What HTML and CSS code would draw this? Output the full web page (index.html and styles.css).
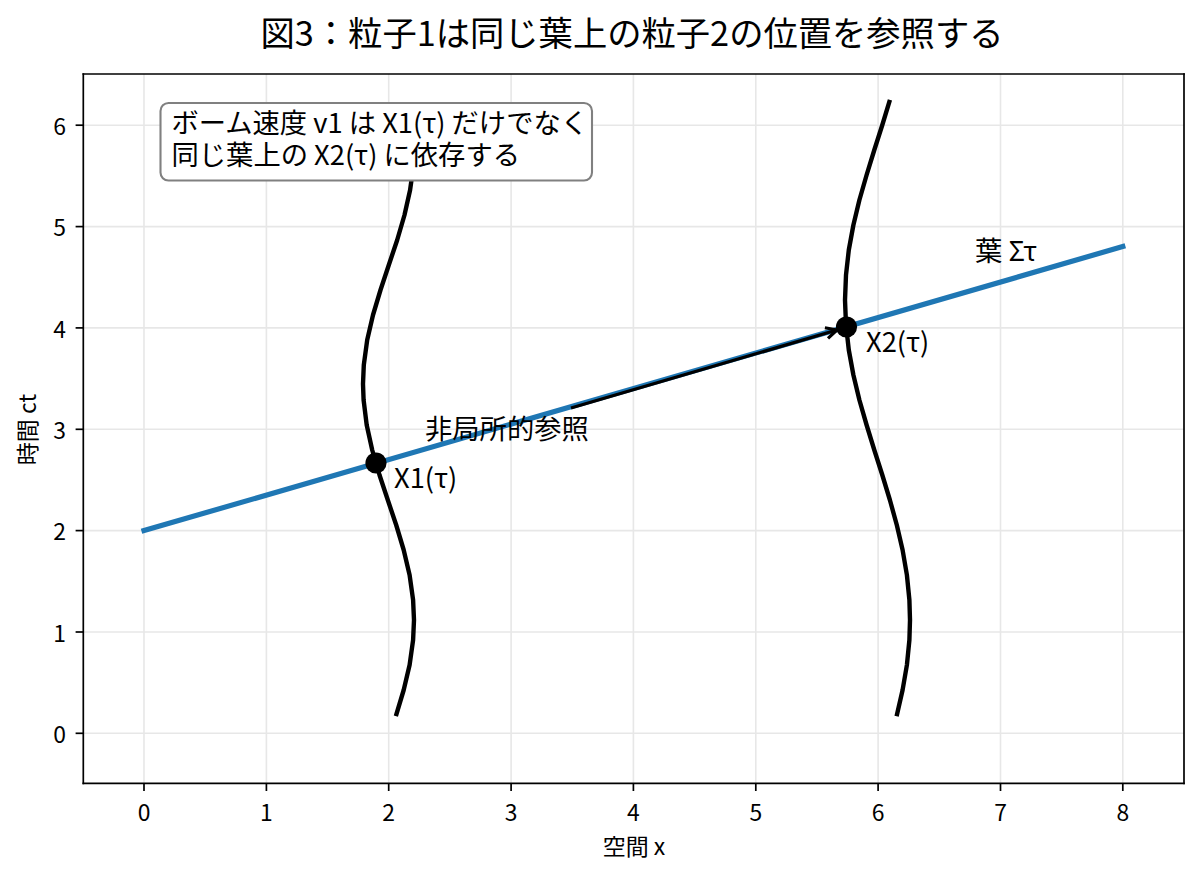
FILE: index.html
```html
<!DOCTYPE html>
<html lang="ja">
<head>
<meta charset="utf-8">
<title>図3</title>
<link rel="stylesheet" href="styles.css">
</head>
<body>
<div class="figure">
  <h1 class="title">図3：粒子1は同じ葉上の粒子2の位置を参照する</h1>
  <svg class="plot" width="1200" height="815" viewBox="0 64 1200 815" xmlns="http://www.w3.org/2000/svg">
    <g class="grid">
      <line x1="144" y1="74" x2="144" y2="783.3"/>
      <line x1="266.4" y1="74" x2="266.4" y2="783.3"/>
      <line x1="388.7" y1="74" x2="388.7" y2="783.3"/>
      <line x1="511.1" y1="74" x2="511.1" y2="783.3"/>
      <line x1="633.4" y1="74" x2="633.4" y2="783.3"/>
      <line x1="755.8" y1="74" x2="755.8" y2="783.3"/>
      <line x1="878.1" y1="74" x2="878.1" y2="783.3"/>
      <line x1="1000.5" y1="74" x2="1000.5" y2="783.3"/>
      <line x1="1122.8" y1="74" x2="1122.8" y2="783.3"/>
      <line x1="83.3" y1="733.3" x2="1184" y2="733.3"/>
      <line x1="83.3" y1="632" x2="1184" y2="632"/>
      <line x1="83.3" y1="530.6" x2="1184" y2="530.6"/>
      <line x1="83.3" y1="429.3" x2="1184" y2="429.3"/>
      <line x1="83.3" y1="327.9" x2="1184" y2="327.9"/>
      <line x1="83.3" y1="226.6" x2="1184" y2="226.6"/>
      <line x1="83.3" y1="125.2" x2="1184" y2="125.2"/>
    </g>

    <line class="leaf" x1="144" y1="530.6" x2="1122.8" y2="246.5"/>

    <polyline class="world" points="396.5,714 403.7,690 409.6,665 413.1,640 414,620 413.1,600 409.6,575 403.7,550 396.2,525 387.8,500 379.5,475 372.2,450 366.7,425 363.6,400 363,384 363.8,365 367.2,340 373,315 380.5,290 388.8,265 397.2,240 404.5,215 410.1,190 412.9,170 414,150 413.3,130"/>
    <polyline class="world" points="897.1,714 902.6,690 906.9,665 909.4,640 910,620 909.4,600 906.9,575 902.6,550 896.8,525 889.9,500 882.3,475 874.3,450 866.6,425 859.4,400 853.4,375 848.8,350 846,325 845,300 846,275 848.8,250 853.4,225 859.4,200 866.6,175 874.3,150 882.3,125 889.3,102"/>

    <line class="arrow" x1="571" y1="408" x2="836" y2="330.3"/>
    <polyline class="arrow-head" points="824.9,327.8 837,330 828,338.4"/>

    <circle class="dot" cx="376" cy="463" r="10.6"/>
    <circle class="dot" cx="846.5" cy="327" r="10.6"/>

    <text class="note" x="425" y="439">非局所的参照</text>
    <text class="note" x="394" y="488">X1(τ)</text>
    <text class="note" x="866" y="352">X2(τ)</text>
    <text class="note" x="975" y="261">葉 Στ</text>

    <g class="axes">
      <line class="spine" x1="83.3" y1="74" x2="1184" y2="74"/>
      <line class="spine" x1="1184" y1="74" x2="1184" y2="783.3"/>
      <line class="spine" x1="83.3" y1="783.3" x2="1184" y2="783.3"/>
      <line class="spine" x1="83.3" y1="74" x2="83.3" y2="783.3"/>

      <g class="ticks">
        <line x1="144" y1="783.3" x2="144" y2="791"/>
        <line x1="266.4" y1="783.3" x2="266.4" y2="791"/>
        <line x1="388.7" y1="783.3" x2="388.7" y2="791"/>
        <line x1="511.1" y1="783.3" x2="511.1" y2="791"/>
        <line x1="633.4" y1="783.3" x2="633.4" y2="791"/>
        <line x1="755.8" y1="783.3" x2="755.8" y2="791"/>
        <line x1="878.1" y1="783.3" x2="878.1" y2="791"/>
        <line x1="1000.5" y1="783.3" x2="1000.5" y2="791"/>
        <line x1="1122.8" y1="783.3" x2="1122.8" y2="791"/>
        <line x1="75.6" y1="733.3" x2="83.3" y2="733.3"/>
        <line x1="75.6" y1="632" x2="83.3" y2="632"/>
        <line x1="75.6" y1="530.6" x2="83.3" y2="530.6"/>
        <line x1="75.6" y1="429.3" x2="83.3" y2="429.3"/>
        <line x1="75.6" y1="327.9" x2="83.3" y2="327.9"/>
        <line x1="75.6" y1="226.6" x2="83.3" y2="226.6"/>
        <line x1="75.6" y1="125.2" x2="83.3" y2="125.2"/>
      </g>

      <g class="xtick-labels">
        <text x="144" y="821">0</text>
        <text x="266.4" y="821">1</text>
        <text x="388.7" y="821">2</text>
        <text x="511.1" y="821">3</text>
        <text x="633.4" y="821">4</text>
        <text x="755.8" y="821">5</text>
        <text x="878.1" y="821">6</text>
        <text x="1000.5" y="821">7</text>
        <text x="1122.8" y="821">8</text>
      </g>
      <g class="ytick-labels">
        <text x="66" y="743.1">0</text>
        <text x="66" y="641.8">1</text>
        <text x="66" y="540.4">2</text>
        <text x="66" y="439.1">3</text>
        <text x="66" y="337.7">4</text>
        <text x="66" y="236.4">5</text>
        <text x="66" y="135">6</text>
      </g>

      <text class="axis-label" x="634" y="855">空間 x</text>
      <text class="axis-label" transform="translate(36 429.5) rotate(-90)" x="0" y="0">時間 ct</text>
    </g>

    <g class="callout">
      <rect class="callout-box" x="160.5" y="103" width="431.5" height="77.5" rx="8" ry="8"/>
      <text class="note callout-text"><tspan x="171.5" y="132.5">ボーム速度 v1 は X1(τ) だけでなく</tspan><tspan x="171.5" y="165">同じ葉上の X2(τ) に依存する</tspan></text>
    </g>
  </svg>
</div>
</body>
</html>
```

FILE: styles.css
```css
html, body {
  margin: 0;
  padding: 0;
  background: #ffffff;
}

body {
  font-family: "Noto Sans CJK JP", "Noto Sans", sans-serif;
  color: #000000;
}

.figure {
  width: 1200px;
  height: 879px;
  display: flex;
  flex-direction: column;
  overflow: hidden;
}

.title {
  margin: 0;
  height: 64px;
  box-sizing: border-box;
  padding: 11px 0 0 80px;
  width: 1184px;
  font-size: 34.3px;
  line-height: 40px;
  font-weight: normal;
  text-align: center;
  white-space: nowrap;
}

.plot {
  display: block;
  flex: none;
}

.plot text {
  font-family: "Noto Sans CJK JP", "Noto Sans", sans-serif;
  fill: #000000;
}

.grid line {
  stroke: #e7e7e7;
  stroke-width: 1.6;
}

.leaf {
  stroke: #1f77b4;
  stroke-width: 5.2;
  stroke-linecap: square;
}

.world {
  fill: none;
  stroke: #000000;
  stroke-width: 4.4;
  stroke-linejoin: round;
  stroke-linecap: square;
}

.arrow {
  stroke: #000000;
  stroke-width: 3.2;
}

.arrow-head {
  fill: none;
  stroke: #000000;
  stroke-width: 3.2;
  stroke-linejoin: miter;
}

.dot {
  fill: #000000;
}

.note {
  font-size: 27.3px;
}

.spine {
  stroke: #000000;
  stroke-width: 1.7;
  stroke-linecap: square;
}

.ticks line {
  stroke: #000000;
  stroke-width: 1.7;
}

.xtick-labels text {
  font-size: 22.9px;
  text-anchor: middle;
}

.ytick-labels text {
  font-size: 22.9px;
  text-anchor: end;
}

.axis-label {
  font-size: 23px;
  text-anchor: middle;
}

.callout-box {
  fill: #ffffff;
  stroke: #808080;
  stroke-width: 2.1;
}
```
